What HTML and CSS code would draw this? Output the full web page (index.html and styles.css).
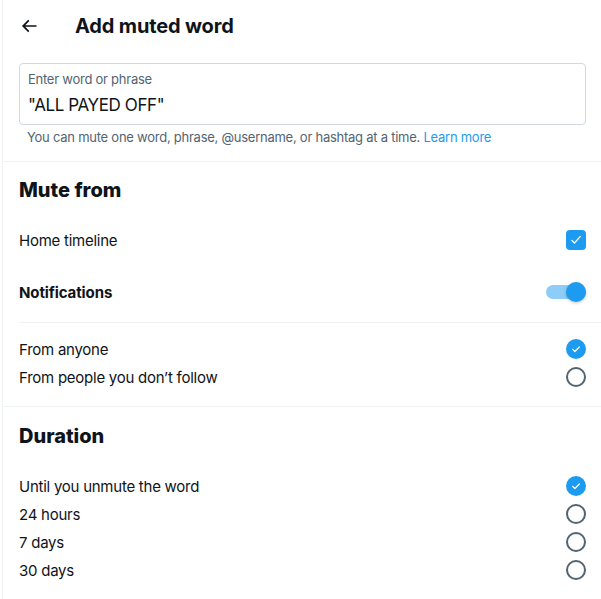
FILE: index.html
```html
<!DOCTYPE html>
<html lang="en">
<head>
<meta charset="utf-8">
<title>Add muted word</title>
<link rel="stylesheet" href="styles.css">
</head>
<body>
<div class="column">
  <header class="topbar">
    <div class="back">
      <svg viewBox="0 0 24 24" width="20" height="20"><path d="M7.414 13l5.043 5.04-1.414 1.42L3.586 12l7.457-7.46 1.414 1.42L7.414 11H21v2H7.414z"/></svg>
    </div>
    <h1 class="title">Add muted word</h1>
  </header>

  <section class="entry">
    <div class="field">
      <div class="field-label">Enter word or phrase</div>
      <div class="field-value">"ALL PAYED OFF"</div>
    </div>
    <p class="hint">You can mute one word, phrase, @username, or hashtag at a time. <a href="#">Learn more</a></p>
  </section>

  <section class="group">
    <h2 class="heading">Mute from</h2>
    <div class="row tall">
      <span>Home timeline</span>
      <span class="checkbox"><svg viewBox="0 0 24 24"><path d="M6.5 12.5l3.5 3.5 7.5-8.5" /></svg></span>
    </div>
    <div class="row tall">
      <span class="bold">Notifications</span>
      <span class="toggle"><span class="knob"></span></span>
    </div>
    <div class="inner-rule"></div>
    <div class="list">
      <div class="row">
        <span>From anyone</span>
        <span class="radio on"><svg viewBox="0 0 24 24"><path d="M7 12.5l3.3 3.3L17 9" /></svg></span>
      </div>
      <div class="row">
        <span>From people you don’t follow</span>
        <span class="radio"></span>
      </div>
    </div>
  </section>

  <section class="group last">
    <h2 class="heading">Duration</h2>
    <div class="list">
      <div class="row">
        <span>Until you unmute the word</span>
        <span class="radio on"><svg viewBox="0 0 24 24"><path d="M7 12.5l3.3 3.3L17 9" /></svg></span>
      </div>
      <div class="row"><span>24 hours</span><span class="radio"></span></div>
      <div class="row"><span>7 days</span><span class="radio"></span></div>
      <div class="row"><span>30 days</span><span class="radio"></span></div>
    </div>
  </section>
</div>
</body>
</html>
```

FILE: styles.css
```css
* { box-sizing: border-box; }
html, body { margin: 0; padding: 0; background: #fff; }
body {
  font-family: Inter, "Liberation Sans", Arial, sans-serif;
  color: #0f1419;
  letter-spacing: -0.25px;
  height: 599px;
  overflow: hidden;
}
.column {
  margin-left: 2px;
  border-left: 1px solid #eff3f4;
  min-height: 599px;
}
.topbar {
  height: 51px;
  display: flex;
  align-items: center;
  padding: 0 16px;
}
.back {
  width: 56px;
  display: flex;
  align-items: center;
}
.back svg { fill: #0f1419; display: block; }
.title {
  margin: 0;
  font-size: 20px;
  font-weight: 700;
  line-height: 24px;
  letter-spacing: -0.15px;
}
.entry {
  padding: 12px 15px 0 16px;
  border-bottom: 1px solid #eff3f4;
  height: 111px;
}
.field {
  border: 1px solid #cfd9de;
  border-radius: 4px;
  height: 62px;
  padding: 7px 8px 0;
}
.field-label {
  font-size: 13px;
  line-height: 16px;
  color: #536471;
}
.field-value {
  margin-top: 7px;
  font-size: 17px;
  line-height: 22px;
  letter-spacing: -0.4px;
}
.hint {
  margin: 4px 0 0;
  padding-left: 8px;
  font-size: 13px;
  line-height: 16px;
  color: #536471;
}
.hint a { color: #1d9bf0; text-decoration: none; }
.group {
  padding-top: 16px;
  border-bottom: 1px solid #eff3f4;
}
.group.last { border-bottom: none; padding-top: 17px; }
.heading {
  margin: 0 16px;
  font-size: 20px;
  font-weight: 800;
  line-height: 24px;
  letter-spacing: 0;
}
.group .heading + .row.tall { margin-top: 12px; }
.group .heading + .list { margin-top: 12px; }
.row {
  display: flex;
  align-items: center;
  justify-content: space-between;
  height: 28px;
  padding: 0 15px 0 16px;
  font-size: 15px;
}
.row.tall { height: 52px; }
.bold { font-weight: 700; letter-spacing: -0.1px; }
.inner-rule {
  margin: 4px 0 0 16px;
  border-top: 1px solid #eff3f4;
}
.list { padding: 12px 0 15px; }
.group.last .list { padding: 12px 0 0; }
.checkbox {
  width: 20px;
  height: 20px;
  border-radius: 4px;
  background: #1d9bf0;
  display: flex;
  align-items: center;
  justify-content: center;
}
.checkbox svg, .radio svg {
  width: 16px;
  height: 16px;
  fill: none;
  stroke: #fff;
  stroke-width: 1.8;
  stroke-linecap: round;
  stroke-linejoin: round;
}
.checkbox svg { width: 18px; height: 18px; }
.toggle {
  position: relative;
  width: 40px;
  height: 14px;
  border-radius: 7px;
  background: #8ecdf8;
}
.knob {
  position: absolute;
  right: 0;
  top: -3px;
  width: 20px;
  height: 20px;
  border-radius: 50%;
  background: #1d9bf0;
  box-shadow: 0 1px 3px rgba(0,0,0,0.25);
}
.radio {
  width: 20px;
  height: 20px;
  border-radius: 50%;
  border: 2px solid #536471;
  display: flex;
  align-items: center;
  justify-content: center;
}
.radio.on {
  border: none;
  background: #1d9bf0;
}
```
